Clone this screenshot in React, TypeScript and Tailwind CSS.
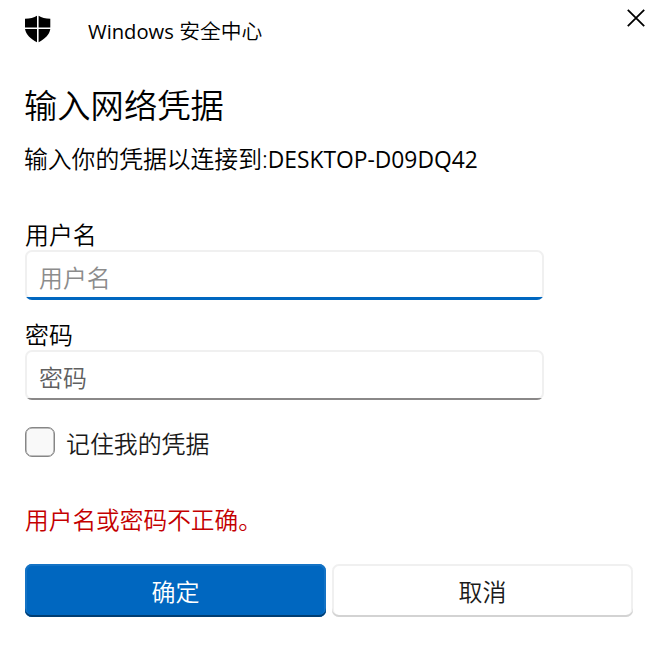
export default function App() {
  return (
    <main className="h-[647px] w-[665px] overflow-hidden bg-white font-['Noto_Sans','Noto_Sans_CJK_SC',sans-serif] font-[350] text-black">
      <header className="flex h-[63px] justify-between">
        <div className="flex items-center pl-[25px]">
          <svg width="26" height="28" viewBox="0 0 26 28" className="-mt-[5px]">
            <path d="M12 .8V12.5H0V3.7C5 3.6 9 2.7 12 .8ZM13.6 .8C16.5 2.7 20.5 3.6 25.3 3.7V12.5H13.6ZM0 14.1H12V27.3C5.5 24 1 19.5 0 14.1ZM13.6 14.1H25.3C24.5 19.5 20 24 13.6 27.3Z" fill="#000" />
          </svg>
          <h2 className="-mt-[2px] ml-[37px] h-[30px] text-[20px] leading-[30px] whitespace-nowrap"><span className="font-['Open_Sans',sans-serif] text-[20.2px] font-normal">Windows </span><span className="text-[20.8px]">安全中心</span></h2>
        </div>
        <svg width="20" height="20" viewBox="0 0 20 20" className="mt-[8px] mr-[19px]">
          <path d="M1.8 1.8L18.2 18.2M18.2 1.8L1.8 18.2" stroke="#000" strokeWidth="1.8" />
        </svg>
      </header>
      <section className="pl-[25px]">
        <h1 className="mt-[18px] -ml-px text-[33.3px] leading-[48px]">输入网络凭据</h1>
        <p className="mt-[12px] -ml-px h-[36px] text-[23.8px] leading-[36px]">输入你的凭据以连接到:<span className="font-['Open_Sans',sans-serif] text-[22.8px] font-normal">DESKTOP-D09DQ42</span></p>
        <label className="mt-[43px] block text-[23.9px] leading-[30px]">用户名</label>
        <div className="flex h-[50px] w-[519px] flex-col justify-between overflow-hidden rounded-[7px] text-[23.9px] leading-[56px] text-[#8c8c8c] shadow-[inset_0_0_0_2px_#f0f0f0]">
          <span className="h-[47px] pl-[14px]">用户名</span>
          <span className="h-[3px] bg-[#0067c0]" />
        </div>
        <label className="mt-[20px] block text-[23.9px] leading-[30px]">密码</label>
        <div className="flex h-[50px] w-[519px] flex-col justify-between overflow-hidden rounded-[7px] text-[23.9px] leading-[56px] text-[#606060] shadow-[inset_0_0_0_2px_#f0f0f0]">
          <span className="h-[48px] pl-[14px]">密码</span>
          <span className="h-[2px] bg-[#8a8888]" />
        </div>
        <label className="mt-[26px] flex h-[32px] items-center gap-[11px] text-[23.9px] text-[#1a1a1a]">
          <span className="size-[30px] rounded-[7px] border-[1.5px] border-[#868686] bg-[#f9f9f9] shadow-[inset_0_0_0_0.5px_#868686]" />
          <span className="pt-[4px]">记住我的凭据</span>
        </label>
        <p className="mt-[44px] text-[23.7px] leading-[36px] text-[#c40000]">用户名或密码不正确。</p>
        <div className="mt-[26px] flex gap-[6px] text-[24px]">
          <button className="h-[53px] w-[301px] rounded-[7px] bg-[#0067c0] pt-[2px] text-white shadow-[inset_0_-2px_0_#003e73,inset_0_0_0_2px_#1473c5]">确定</button>
          <button className="h-[53px] w-[301px] rounded-[7px] pt-[2px] text-[#1a1a1a] shadow-[inset_0_-2px_0_#d3d3d3,inset_0_0_0_2px_#f0f0f0]">取消</button>
        </div>
      </section>
    </main>
  );
}
